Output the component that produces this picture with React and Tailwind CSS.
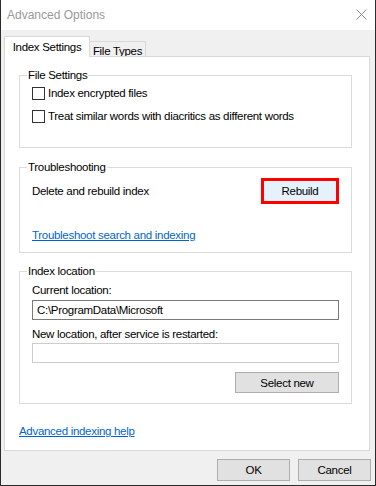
import React from 'react';

function Checkbox({ label }) {
  return (
    <label className="flex items-center gap-[3px] h-[16px]">
      <span className="w-[13px] h-[13px] border border-[#333333] bg-white shrink-0" />
      <span>{label}</span>
    </label>
  );
}

function Group({ title, className = '', children }) {
  return (
    <fieldset className={`border border-[#dcdcdc] px-[12px] ${className}`}>
      <legend className="-ml-[5px] px-[1px] leading-[16px]">{title}</legend>
      {children}
    </fieldset>
  );
}

export default function App() {
  return (
    <div
      className="w-[376px] h-[486px] bg-[#f0f0f0] border-x border-b border-[#2b2b2b] flex flex-col text-[11.5px] leading-[16px] text-black tracking-[-0.3px]"
      style={{ fontFamily: '"Liberation Sans", Arial, sans-serif' }}
    >
      {/* title bar */}
      <div className="h-[30px] bg-white flex items-center justify-between pl-[6px] pr-[7px] shrink-0">
        <span className="text-[#999999] text-[12px] tracking-normal">Advanced Options</span>
        <svg width="11" height="11" viewBox="0 0 11 11" className="mr-[1px] mt-[-2px]">
          <path d="M0.5 0.5L10.5 10.5M10.5 0.5L0.5 10.5" stroke="#888888" strokeWidth="1" />
        </svg>
      </div>

      {/* tabs */}
      <div className="flex items-end ml-[3px] mt-[6px] -mb-px">
        <div className="relative h-[21px] w-[86px] bg-white border-t border-x border-[#d9d9d9] flex justify-center pt-[2px]">
          Index Settings
        </div>
        <div className="h-[16px] w-[56px] bg-[#f0f0f0] border-t border-r border-[#d9d9d9] flex justify-center pt-[1px]">
          File Types
        </div>
      </div>

      {/* panel */}
      <div className="ml-[3px] mr-[5px] h-[395px] bg-white border border-[#d9d9d9] pl-[14px] pr-[17px] pt-[10px] flex flex-col">
        <Group title="File Settings" className="pb-[23px]">
          <div className="flex flex-col gap-[7px] mt-[2px]">
            <Checkbox label="Index encrypted files" />
            <Checkbox label="Treat similar words with diacritics as different words" />
          </div>
        </Group>

        <Group title="Troubleshooting" className="mt-[11px] pb-[9px]">
          <div className="flex items-center justify-between mt-[3px] h-[26px]">
            <span>Delete and rebuild index</span>
            <button className="w-[78px] h-[26px] bg-[#e5f1fb] border-[3px] border-[#ff0000] flex items-center justify-center">
              Rebuild
            </button>
          </div>
          <a href="#" className="block mt-[23px] text-[#0066cc] underline w-fit">
            Troubleshoot search and indexing
          </a>
        </Group>

        <Group title="Index location" className="mt-[10px] pb-[10px]">
          <div className="mt-[3px]">Current location:</div>
          <div className="mt-[2px] h-[20px] border border-[#7a7a7a] flex items-center px-[4px]">
            C:\ProgramData\Microsoft
          </div>
          <div className="mt-[6px]">New location, after service is restarted:</div>
          <div className="mt-[1px] h-[20px] border border-[#cccccc]" />
          <div className="flex justify-end mt-[9px]">
            <button className="w-[104px] h-[21px] bg-[#e1e1e1] border border-[#adadad] flex items-center justify-center">
              Select new
            </button>
          </div>
        </Group>

        <a href="#" className="block mt-[19px] text-[#0066cc] underline w-fit">
          Advanced indexing help
        </a>
      </div>

      {/* footer buttons */}
      <div className="flex justify-end gap-[8px] mr-[4px] mt-[8px]">
        <button className="w-[73px] h-[22px] bg-[#e1e1e1] border border-[#adadad]">OK</button>
        <button className="w-[73px] h-[22px] bg-[#e1e1e1] border border-[#adadad]">Cancel</button>
      </div>
    </div>
  );
}
